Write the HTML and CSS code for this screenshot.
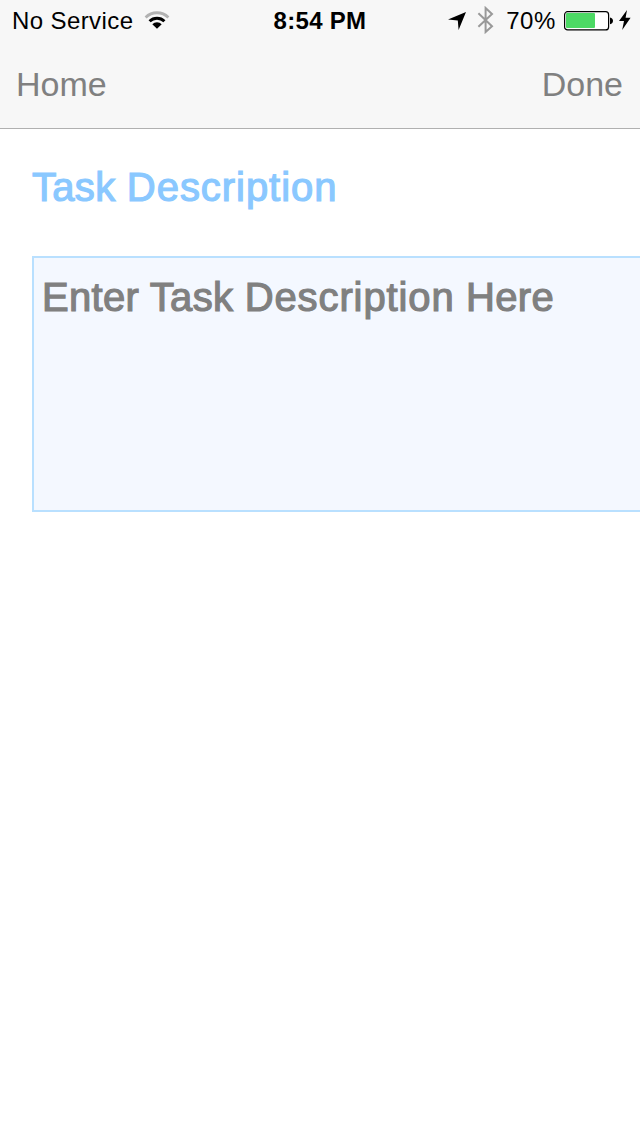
FILE: index.html
```
<!DOCTYPE html>
<html lang="en">
<head>
<meta charset="utf-8">
<title>Task Description</title>
<link rel="stylesheet" href="styles.css">
</head>
<body>
<header class="header">
  <div class="status">
    <div class="status-left">
      <span class="carrier">No Service</span>
      <svg class="wifi" width="26" height="20" viewBox="0 0 26 20">
        <path d="M1.6 7.4A16.3 16.3 0 0 1 24.4 7.4" fill="none" stroke="#b2b2b2" stroke-width="2.8"/>
        <path d="M5.6 11.3A10.6 10.6 0 0 1 20.4 11.3" fill="none" stroke="#000" stroke-width="3"/>
        <path d="M8.3 14.2A6.6 6.6 0 0 1 17.7 14.2L13 18.8Z"/>
      </svg>
    </div>
    <span class="clock">8:54 PM</span>
    <div class="status-right">
      <svg class="location" width="18" height="18" viewBox="0 0 18 18"><path d="M18 0L10.6 18L9.8 8.5L0 7.4Z"/></svg>
      <svg class="bluetooth" width="18" height="28" viewBox="0 0 18 28"><path d="M1.4 7.3L15 20.2L8.6 26V2L15 8L1.4 20.8" fill="none" stroke="#999" stroke-width="2"/></svg>
      <span class="percent">70%</span>
      <svg class="battery" width="50" height="20" viewBox="0 0 50 20">
        <rect x=".6" y=".7" width="44" height="18.2" rx="3" fill="#fff" stroke="#000" stroke-width="1.2"/>
        <rect x="2" y="2" width="29" height="15" rx="1" fill="#4cd964"/>
        <path d="M46 6.5C50 7 50 12.7 46 13.3Z"/>
      </svg>
      <svg class="bolt" width="12" height="20" viewBox="0 0 12 20"><path d="M8 0L0 11H5L3.2 20L11.6 7.8H6.6Z"/></svg>
    </div>
  </div>
  <nav class="nav"><a>Home</a><a>Done</a></nav>
</header>
<main class="content">
  <h1 class="title">Task <span class="long-word">Description</span></h1>
  <div class="editor">Enter Task <span class="long-word">Description</span> Here</div>
</main>
</body>
</html>
```
FILE: styles.css
```
* { box-sizing: border-box; }
body {
  margin: 0;
  height: 1136px;
  overflow: hidden;
  background: #fff;
  font-family: "Liberation Sans", Arial, sans-serif;
}
svg { display: block; flex: none; }
.header {
  height: 129px;
  background: #f7f7f7;
  border-bottom: 1px solid #b0b0b0;
}
.status {
  display: grid;
  grid-template-columns: 1fr auto 1fr;
  height: 40px;
  padding: 0 10px 0 12px;
  font-size: 24px;
  line-height: 41px;
  white-space: nowrap;
}
.status-left, .status-right { display: flex; }
.status-right { justify-content: flex-end; }
.carrier { letter-spacing: 0.4px; }
.wifi { margin: 10px 0 0 10.5px; }
.clock {
  font-weight: 700;
  letter-spacing: 0.3px;
  margin-left: -2px;
}
.location { margin-top: 12px; }
.bluetooth { margin: 6px 0 0 11px; }
.percent { margin-left: 11px; letter-spacing: 0.6px; }
.battery { margin: 11px 0 0 8px; }
.bolt { margin: 10px -1px 0 5px; }
.nav {
  display: flex;
  justify-content: space-between;
  padding: 0 17px 0 16px;
  font-size: 34px;
  line-height: 88px;
  color: #808080;
}
.content { padding: 34px 0 0 32px; }
.title {
  margin: 0;
  font-size: 40px;
  font-weight: 400;
  line-height: 48px;
  letter-spacing: 0.3px;
  color: #8ac8ff;
  -webkit-text-stroke: 1.2px #8ac8ff;
}
.editor {
  width: 640px;
  height: 256px;
  margin-top: 45px;
  padding: 15px 8px;
  border: 2px solid #b9e0ff;
  background: #f4f8ff;
  font-size: 40px;
  line-height: 48px;
  letter-spacing: 0.3px;
  color: #808080;
  white-space: nowrap;
  -webkit-text-stroke: 1.2px #808080;
}
.long-word { letter-spacing: 0.95px; }
.editor .long-word { letter-spacing: 0.9px; }
```
